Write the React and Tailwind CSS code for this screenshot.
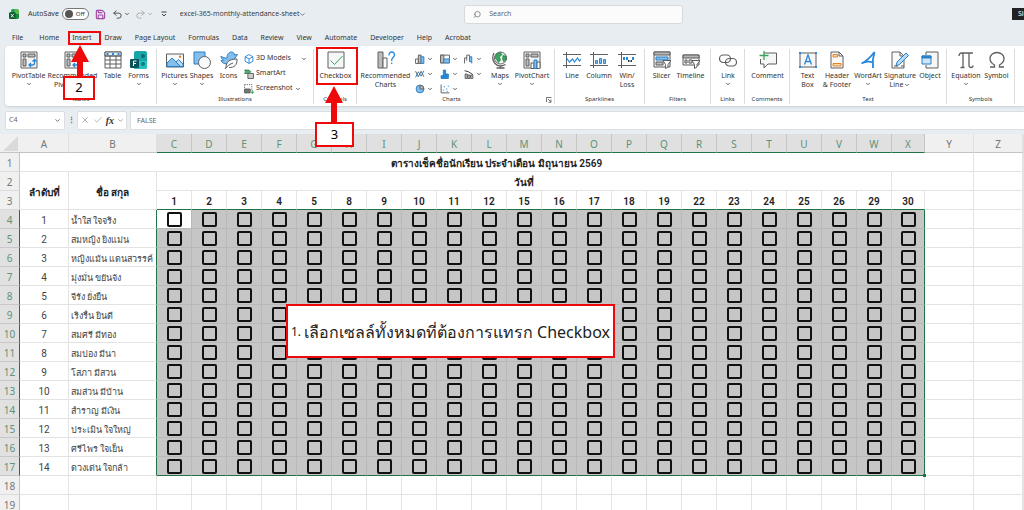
import React from "react";
import { ChevronDown, Search, Save, Undo2, Redo2, X, Check } from "lucide-react";

const tabs = [
  "File", "Home", "Insert", "Draw", "Page Layout", "Formulas", "Data",
  "Review", "View", "Automate", "Developer", "Help", "Acrobat",
];

const columns = "CDEFGHIJKLMNOPQRSTUVWX".split("");
const days = [1, 2, 3, 4, 5, 8, 9, 10, 11, 12, 15, 16, 17, 18, 19, 22, 23, 24, 25, 26, 29, 30];

const students = [
  "น้ำใส ใจจริง",
  "สมหญิง ยิงแม่น",
  "หญิงแม้น แดนสวรรค์",
  "มุ่งมั่น ขยันจัง",
  "จีรัง ยั่งยืน",
  "เริงรื่น ยินดี",
  "สมศรี มีทอง",
  "สมปอง มีนา",
  "โสภา มีสวน",
  "สมส่วน มีบ้าน",
  "สำราญ มีเงิน",
  "ประเมิน ใจใหญ่",
  "ศรีไพร ใจเย็น",
  "ดวงเด่น ใจกล้า",
];

// ------------------------------
// Icons
// ------------------------------
const Icon = ({ children, small }) => (
  <svg
    viewBox="0 0 18 18"
    className={small ? "h-[10px] w-[10px] shrink-0" : "h-[18px] w-[18px] shrink-0"}
    fill="none"
    stroke="#5f5f5f"
    strokeWidth={small ? 1.7 : 1}
  >
    {children}
  </svg>
);

const ExcelLogo = () => (
  <svg viewBox="0 0 18 18" className="h-[10px] w-[10px]">
    <path d="M7 0h8a3 3 0 0 1 3 3v6H4V3a3 3 0 0 1 3-3z" fill="#5dbb4a" />
    <path d="M4 3a3 3 0 0 1 3-3h3v9H4z" fill="#1f9d55" />
    <path d="M9 9h9v6a3 3 0 0 1-3 3H9z" fill="#1a8a44" />
    <rect x="0" y="6" width="12" height="12" rx="2" fill="#0f5c2e" />
    <path d="M3.500 9l5 6M8.500 9l-5 6" stroke="#fff" strokeWidth="1.600" />
  </svg>
);

const icons = {
  pivot: (
    <Icon>
      <path d="M1 1h16v16H1z" fill="#f3f3f3" />
      <path d="M3 3h3v3H3zM8 3h7v3H8zM3 8h3v7H3z" fill="#bdbdbd" />
      <path d="M9 14h3.500q2 0 2-2V9M12.500 10.500l2-2 2 2M11 12l-2 2 2 2" stroke="#2b88d8" strokeWidth="1.300" />
    </Icon>
  ),
  table: (
    <Icon>
      <path d="M1 1h16v16H1z" fill="#fff" />
      <path d="M1 1h16v4H1z" fill="#e3f0fa" />
      <path d="M1 5h16M1 9h16M1 13h16M6 5v12M12 5v12" />
      <path d="M2.500 3h2M8 3h2M13.500 3h2" stroke="#2b88d8" strokeWidth="2" />
    </Icon>
  ),
  forms: (
    <Icon>
      <rect x="4" y="0" width="13" height="18" rx="2" fill="#1aa5a8" stroke="none" />
      <path d="M4 10h13v6a2 2 0 0 1-2 2H4z" fill="#2bc0c0" stroke="none" />
      <circle cx="13" cy="5" r="2" fill="#0b6a72" stroke="none" />
      <circle cx="13" cy="13" r="2" fill="#0b7c84" stroke="none" />
      <rect x="0" y="8" width="9" height="9" rx="1" fill="#07525c" stroke="none" />
      <path d="M3.500 15v-5h3M3.500 12.500h2.500" stroke="#fff" />
    </Icon>
  ),
  pictures: (
    <Icon>
      <path d="M0.500 3h17v13H0.500z" fill="#f8f8f8" />
      <path d="M1 15.500V12l5-5 9 8.500z" fill="#83beec" stroke="#2b7fc3" />
      <path d="M10 11l2.500-2.500 4.500 4.500v2.500h-2.500z" fill="#b8daf4" stroke="#2b7fc3" />
      <circle cx="14" cy="5.800" r="1.200" fill="#e8832a" stroke="none" />
    </Icon>
  ),
  shapes: (
    <Icon>
      <path d="M1 1h11v12H1z" fill="#83beec" stroke="#2b7fc3" />
      <circle cx="11.500" cy="11.500" r="6" fill="#fafafa" />
    </Icon>
  ),
  bird: (
    <Icon>
      <path d="M1 5c2 2 4 2 6 2 0-4 2-6 4.500-6 2 0 3 1.500 3 3l3-.500-2.500 3.500C14 12 11 13 7 13 4 13 2 11.500 1 9.500l2.500-.500C2 8 1 7 1 5z" fill="#83beec" stroke="#2b7fc3" />
      <path d="M6 17c0-6 3-9 11-9 .500 6-3 9-8 8.500M5 18c2-3 5-5 8-6" fill="#fafafa" />
    </Icon>
  ),
  checkbox: (
    <Icon>
      <path d="M1 1h16v16H1z" fill="#f6f6f6" />
      <path d="M3.500 9.500l4 4 8-8.500" stroke="#35a35e" />
    </Icon>
  ),
  recCharts: (
    <Icon>
      <path d="M1 1h5v16H1z" fill="#bcbcbc" />
      <path d="M6 7h4v10H6z" fill="#fff" />
      <path d="M12 4.500C12 2 13 1 14.700 1s2.800 1 2.800 3-2.800 2.500-2.800 5v1M14.700 11.500v1.500" stroke="#2b88d8" strokeWidth="1.300" />
    </Icon>
  ),
  globe: (
    <Icon>
      <circle cx="9.500" cy="7" r="6" fill="#eef7f1" />
      <path d="M5.500 3l4-1.500 1.500 2-2.500 2.500 1 3-2 2.500-2-3-1.500-2zM12 4.500l3 .500v4l-2.500 1.500-1-3z" fill="#3aa663" stroke="#207a44" strokeWidth="0.700" />
      <path d="M3 2Q0 8 4 12.500T14.500 13.500M9.500 14.500v2.500M5.500 17h8" strokeWidth="1.300" />
    </Icon>
  ),
  pivotChart: (
    <Icon>
      <path d="M1 1h16v16H1z" fill="#f3f3f3" />
      <path d="M3 3h3v3H3zM8 3h7v3H8zM3 8h3v7H3z" fill="#bdbdbd" />
      <path d="M8 12h3v5.500H8z" fill="#fff" />
      <path d="M11 9h3v8.500h-3z" fill="#83beec" stroke="#2b7fc3" />
      <path d="M14 11h3v6.500h-3z" fill="#fff" />
    </Icon>
  ),
  line: (
    <Icon>
      <path d="M0 3.500h18M0 14.500h18M3.500 1v16" />
      <path d="M3.500 7l3 4 3-3 2 3 3-4 2 3 1.500-2" stroke="#2b88d8" strokeWidth="1.200" />
    </Icon>
  ),
  column: (
    <Icon>
      <path d="M0 3.500h18M0 14.500h18M3.500 1v16" />
      <path d="M5.500 9.500h2v3h-2zM9.500 7.500h2v5h-2zM13.500 8.500h2v4h-2z" fill="#83beec" stroke="#2b88d8" />
    </Icon>
  ),
  winLoss: (
    <Icon>
      <path d="M0 3.500h18M0 14.500h18M3.500 1v16" />
      <path d="M5 6h2v3H5zM8 6h2v3H8zM14 6h2v3h-2z" fill="#2b88d8" stroke="none" />
      <path d="M10 9h1.500v2H10zM12.500 9H14v2h-1.500z" fill="#333" stroke="none" />
    </Icon>
  ),
  slicer: (
    <Icon>
      <path d="M1 1h16v15H1z" fill="#f3f3f3" />
      <path d="M1 1h16v3H1z" fill="#b5b5b5" />
      <path d="M3 6h12v3H3z" fill="#83beec" stroke="#2b7fc3" />
      <path d="M3 11h7v3H3z" fill="#bdbdbd" />
      <path d="M10 9.500h8l-3 4v2.500l-2.500 1.500v-4z" fill="#fff" />
    </Icon>
  ),
  timeline: (
    <Icon>
      <path d="M1 4h16v10H1z" fill="#f3f3f3" />
      <path d="M1 4h16v3H1z" fill="#b5b5b5" />
      <path d="M3 9h2v3H3zM7 9h3v3H7z" fill="#ddd" />
      <path d="M10 9.500h8l-3 4v2.500l-2.500 1.500v-4z" fill="#fff" />
    </Icon>
  ),
  link: (
    <Icon>
      <rect x="0.500" y="4" width="11" height="7.500" rx="3.700" strokeWidth="1.200" />
      <rect x="6.500" y="7.500" width="11" height="7.500" rx="3.700" strokeWidth="1.200" />
    </Icon>
  ),
  comment: (
    <Icon>
      <path d="M5 2h12.500v11H9l-4 4v-4H1.500V8" fill="#f6f6f6" />
      <path d="M5 0v9M0.500 4.500h9" stroke="#35a35e" strokeWidth="1.300" />
    </Icon>
  ),
  textBox: (
    <Icon>
      <path d="M1 2h16v14H1z" fill="#f6f6f6" />
      <path d="M5.500 13.500L9 4l3.500 9.500M6.500 10.500h5" stroke="#2b88d8" strokeWidth="1.300" />
      <path d="M0 1h2v2H0zM16 1h2v2h-2zM0 15h2v2H0zM16 15h2v2h-2z" fill="#2b88d8" stroke="none" />
    </Icon>
  ),
  header: (
    <Icon>
      <path d="M3 1h8l4 4v12H3z" fill="#fafafa" />
      <path d="M11 1v4h4" />
      <path d="M5 3.500h4.500v2.500H5zM5 12.500h8v2.500H5z" fill="#fbd9a8" stroke="#e8832a" />
    </Icon>
  ),
  wordArt: (
    <Icon>
      <path d="M2.500 12.500Q9 9.500 15.500 1Q13 9 14 17M2.500 12.500Q8 9.500 14 11.500" stroke="#2b88d8" strokeWidth="1.800" />
    </Icon>
  ),
  signature: (
    <Icon>
      <path d="M1 1h8l4 4v12H1z" fill="#fafafa" />
      <path d="M9 1v4h4" />
      <path d="M5 15l1-4 9-9 2.500 2.500-9 9z" fill="#b8daf4" stroke="#2b7fc3" />
      <path d="M3 15h4M10 15h3" />
    </Icon>
  ),
  object: (
    <Icon>
      <path d="M5 4V1h12v16H5v-3" fill="#f6f6f6" />
      <path d="M1 5h9v8H1z" fill="#cfe6f8" stroke="#2b7fc3" />
      <path d="M1 5h9v2H1z" fill="#2b88d8" stroke="#2b7fc3" />
    </Icon>
  ),
  pi: (
    <Icon>
      <path d="M2 5q0-3 3-3h11M6 2v14M3.500 16.500h4M12 2v12q0 2.500 2 2.500t2-2" strokeWidth="1.300" />
    </Icon>
  ),
  omega: (
    <Icon>
      <path d="M2 16h4.500v-2Q2 11.500 2 7.500C2 4 5 1.500 9 1.500s7 2.500 7 6q0 4-4.500 6.500v2H16" strokeWidth="1.300" />
    </Icon>
  ),
  cube: (
    <Icon small>
      <path d="M9 1l7 4v8l-7 4-7-4V5zM2 5l7 4 7-4M9 9v8" stroke="#2b88d8" />
    </Icon>
  ),
  smartArt: (
    <Icon small>
      <path d="M1 2h8l3 3-3 3H1l2-3z" fill="#58b07a" stroke="#35805a" />
      <path d="M7 8h10v9H7z" fill="#d0d0d0" />
    </Icon>
  ),
  screenshot: (
    <Icon small>
      <path d="M1 1h13v10H1z" strokeDasharray="2 2" />
      <path d="M1 9h10v7H1z" fill="#777" />
      <path d="M15 11v7M11.500 15h6.500" stroke="#35a35e" />
    </Icon>
  ),
};

const miniCharts = [
  <React.Fragment key="column">
    <path d="M1 9h5v8H1z" fill="#fff" />
    <path d="M6 2h5v15H6z" fill="#bcbcbc" />
    <path d="M11 5h5v12h-5z" fill="#83beec" stroke="#2b7fc3" />
  </React.Fragment>,
  <React.Fragment key="hierarchy">
    <path d="M1 2h16v14H1z" fill="#fff" />
    <path d="M1 2h6v14H1z" fill="#bcbcbc" />
    <path d="M7 9h10v7H7z" fill="#83beec" stroke="#2b7fc3" />
  </React.Fragment>,
  <React.Fragment key="waterfall">
    <path d="M1 17V7h4M5 12V2h5v10M14 14v3" />
    <path d="M10 5h4v9h-4z" fill="#83beec" stroke="#2b7fc3" />
  </React.Fragment>,
  <React.Fragment key="line">
    <path d="M1 4l5 10 5-10 5 10" />
    <path d="M1 15L6 5l5 8 5-10" stroke="#2b7fc3" />
  </React.Fragment>,
  <path key="statistic" d="M2 17v-5h4v5zM6 17V2h4v15zM10 17V9h5v8z" fill="#2b88d8" stroke="#2b7fc3" />,
  <React.Fragment key="combo">
    <path d="M2 9h4v8H2zM7 11h4v6H7zM12 11h4v6h-4z" fill="#bcbcbc" />
    <path d="M1 3l7 2 8 5" stroke="#333" />
  </React.Fragment>,
  <React.Fragment key="pie">
    <circle cx="9" cy="9" r="7" fill="#83beec" stroke="#2b7fc3" />
    <path d="M9 2a7 7 0 0 1 7 7H9z" fill="#bcbcbc" />
  </React.Fragment>,
  <React.Fragment key="scatter">
    <path d="M2 1v15h15" />
    <path d="M5 11h2M7 5h2M11 9h2M14 4h2M12 13h2" stroke="#2b7fc3" />
  </React.Fragment>,
];

const SmallArrow = ({ className = "" }) => (
  <ChevronDown className={`h-[6px] w-[6px] shrink-0 ${className}`} strokeWidth={3} />
);

// ------------------------------
// Ribbon
// ------------------------------
const Tool = ({ icon, lines, arrow, inlineArrow, width }) => (
  <button type="button" className={`flex shrink-0 flex-col items-center ${width}`}>
    {icons[icon]}
    <span className="mt-[2px] flex flex-col items-center text-[7px] leading-[9px] whitespace-nowrap">
      {lines.map((line, i) => (
        <span key={line} className="flex items-center gap-px">
          {line}
          {inlineArrow && i === lines.length - 1 && <SmallArrow />}
        </span>
      ))}
    </span>
    {arrow && <SmallArrow className="mt-px" />}
  </button>
);

const Group = ({ label, width, launcher, children }) => (
  <section className={`mt-[3px] mb-[2px] flex shrink-0 flex-col border-r border-[#dcdcdc] ${width}`}>
    <div className="flex min-h-0 flex-1 items-start justify-center pt-[2px] pl-px">{children}</div>
    <div className="flex h-[9px] items-center">
      <h2 className="flex-1 text-center text-[6px] leading-[9px]">{label}</h2>
      {launcher && (
        <button type="button" aria-label={`${label} settings`} className="mr-[2px]">
          <svg viewBox="0 0 12 12" className="h-[6px] w-[6px]" fill="none" stroke="#555" strokeWidth="1.600">
            <path d="M1 10V1h10M4 4l6 6M10 5v5.500H5" />
          </svg>
        </button>
      )}
    </div>
  </section>
);

const Ribbon = () => (
  <div className="ml-[5px] flex h-[60px] shrink-0 overflow-hidden rounded-l-[4px] bg-white shadow-sm">
    <Group label="Tables" width="w-[152px]">
      <Tool icon="pivot" lines={["PivotTable"]} arrow width="w-[35px]" />
      <Tool icon="pivot" lines={["Recommended", "PivotTables"]} width="w-[53px]" />
      <Tool icon="table" lines={["Table"]} width="w-[27px]" />
      <Tool icon="forms" lines={["Forms"]} arrow width="w-[25px]" />
    </Group>
    <Group label="Illustrations" width="w-[157px]">
      <Tool icon="pictures" lines={["Pictures"]} arrow width="w-[27px]" />
      <Tool icon="shapes" lines={["Shapes"]} arrow width="w-[27px]" />
      <Tool icon="bird" lines={["Icons"]} width="w-[27px]" />
      <div className="flex w-[68px] flex-col pl-[2px] text-[7px] whitespace-nowrap">
        <button type="button" className="flex h-[15px] items-center gap-[2px]">
          {icons.cube} 3D Models <SmallArrow className="ml-2" />
        </button>
        <button type="button" className="flex h-[15px] items-center gap-[2px]">{icons.smartArt} SmartArt</button>
        <button type="button" className="flex h-[15px] items-center gap-[2px]">
          {icons.screenshot} Screenshot <SmallArrow />
        </button>
      </div>
    </Group>
    <Group label="Controls" width="w-[43px]">
      <Tool icon="checkbox" lines={["Checkbox"]} width="w-[42px]" />
    </Group>
    <Group label="Charts" width="w-[198px]" launcher>
      <Tool icon="recCharts" lines={["Recommended", "Charts"]} width="w-[53px]" />
      <div className="grid w-[77px] grid-cols-3 pl-[3px]">
        {miniCharts.map((shape) => (
          <button type="button" key={shape.key} aria-label={`${shape.key} chart`} className="flex h-[15px] items-center gap-[2px]">
            <Icon small>{shape}</Icon>
            <SmallArrow />
          </button>
        ))}
      </div>
      <Tool icon="globe" lines={["Maps"]} arrow width="w-[22px]" />
      <Tool icon="pivotChart" lines={["PivotChart"]} arrow width="w-[42px]" />
    </Group>
    <Group label="Sparklines" width="w-[90px]">
      <Tool icon="line" lines={["Line"]} width="w-[26px]" />
      <Tool icon="column" lines={["Column"]} width="w-[28px]" />
      <Tool icon="winLoss" lines={["Win/", "Loss"]} width="w-[28px]" />
    </Group>
    <Group label="Filters" width="w-[66px]">
      <Tool icon="slicer" lines={["Slicer"]} width="w-[25px]" />
      <Tool icon="timeline" lines={["Timeline"]} width="w-[33px]" />
    </Group>
    <Group label="Links" width="w-[34px]">
      <Tool icon="link" lines={["Link"]} arrow width="w-[26px]" />
    </Group>
    <Group label="Comments" width="w-[45px]">
      <Tool icon="comment" lines={["Comment"]} width="w-[44px]" />
    </Group>
    <Group label="Text" width="w-[157px]">
      <Tool icon="textBox" lines={["Text", "Box"]} width="w-[27px]" />
      <Tool icon="header" lines={["Header", "& Footer"]} width="w-[32px]" />
      <Tool icon="wordArt" lines={["WordArt"]} arrow width="w-[30px]" />
      <Tool icon="signature" lines={["Signature", "Line"]} inlineArrow width="w-[34px]" />
      <Tool icon="object" lines={["Object"]} width="w-[26px]" />
    </Group>
    <Group label="Symbols" width="w-[68px]">
      <Tool icon="pi" lines={["Equation"]} arrow width="w-[31px]" />
      <Tool icon="omega" lines={["Symbol"]} width="w-[30px]" />
    </Group>
  </div>
);

const TitleBar = () => (
  <header className="flex h-[28px] shrink-0 items-center text-[7px]">
    <div className="flex w-[464px] shrink-0 items-center pl-[9px]">
      <ExcelLogo />
      <div className="ml-[9px] flex items-center gap-[3px]">
        <span id="autosave">AutoSave</span>
        <button
          type="button"
          role="switch"
          aria-checked="false"
          aria-labelledby="autosave"
          className="flex h-[12px] w-[27px] items-center gap-[3px] rounded-full border border-[#777] bg-white px-[2px] text-[6px]"
        >
          <span className="h-[8px] w-[8px] rounded-full bg-[#555]" />
          Off
        </button>
      </div>
      <Save className="ml-[6px] h-[11px] w-[11px] text-[#a349a4]" strokeWidth={2.5} />
      <Undo2 className="ml-[6px] h-[11px] w-[11px] text-[#444]" />
      <SmallArrow className="ml-px" />
      <Redo2 className="ml-[5px] h-[11px] w-[11px] text-[#aaa]" />
      <SmallArrow className="ml-px text-[#999]" />
      <svg viewBox="0 0 12 12" className="ml-[8px] h-[6px] w-[6px]" fill="none" stroke="#444" strokeWidth="2">
        <path d="M1 2h10M2 6l4 4 4-4" />
      </svg>
      <span className="ml-[13px] font-['Open_Sans',sans-serif]">excel-365-monthly-attendance-sheet</span>
      <ChevronDown className="h-[7px] w-[7px]" />
    </div>
    <label className="flex h-[19px] w-[219px] items-center gap-2 rounded-[3px] border border-[#d5dadd] bg-[#fbfbfb] px-2">
      <Search className="h-[9px] w-[9px] -scale-x-100 text-[#666]" />
      <input type="text" placeholder="Search" aria-label="Search" className="w-full outline-none placeholder:text-[#666]" />
    </label>
    <button type="button" className="ml-auto h-[12px] w-[12px] overflow-hidden bg-[#222] pl-[6px] text-left whitespace-nowrap text-white">
      Sign in
    </button>
  </header>
);

const FormulaBar = () => (
  <div className="flex h-[28px] shrink-0 items-center pl-[5px] text-[7px] text-[#666]">
    <div className="flex h-[19px] w-[60px] items-center justify-between rounded-[2px] border border-[#dcdfe1] bg-white px-[3px]">
      C4
      <ChevronDown className="h-[7px] w-[7px]" strokeWidth={3} />
    </div>
    <span className="w-[12px] text-center font-bold">⋮</span>
    <div className="flex h-[19px] w-[50px] items-center justify-between rounded-[2px] border border-[#dcdfe1] bg-white px-[2px]">
      <X className="h-[10px] w-[10px] text-[#aaa]" />
      <Check className="h-[10px] w-[10px] text-[#aaa]" />
      <span className="font-['Liberation_Serif',serif] text-[10px] font-bold text-[#333] italic">fx</span>
      <ChevronDown className="h-[7px] w-[7px]" />
    </div>
    <input
      type="text"
      aria-label="Formula"
      defaultValue="FALSE"
      className="ml-[3px] h-[19px] flex-1 border border-r-0 border-[#dcdfe1] bg-white px-[6px]"
    />
  </div>
);

// ------------------------------
// Sheet
// ------------------------------
const cell = "h-[19px] p-0 pt-[3px] border-r border-b border-[#e3e3e3] overflow-hidden whitespace-nowrap";
const headCell = "text-center font-semibold text-[#222] font-[Roboto,sans-serif]";

const RowHead = ({ n, active }) => (
  <th
    scope="row"
    className={`h-[19px] border-r border-b p-0 pt-[3px] text-center font-normal ${
      active
        ? "border-r-[#217346] border-b-[#c8c8c8] bg-[#e1e1e1] text-[#5f9277]"
        : "border-r-[#c4c4c4] border-b-[#dcdcdc] bg-[#f0f0f0] text-[#777]"
    }`}
  >
    {n}
  </th>
);

const Sheet = () => (
  <table className="w-full table-fixed border-separate border-spacing-0 bg-white text-[10px] leading-[15px] text-[#444]">
    <colgroup>
      <col className="w-[20px]" />
      <col className="w-[49px]" />
      <col className="w-[88px]" />
      {columns.map((c) => (
        <col key={c} className={c === "X" ? "w-[33px]" : "w-[35px]"} />
      ))}
      <col className="w-[49px]" />
      <col className="w-[49px]" />
      <col />
    </colgroup>
    <thead>
      <tr>
        <th className="h-[19px] border-b border-[#c4c4c4] bg-[#f0f0f0] p-0" aria-label="Select all">
          <svg viewBox="0 0 20 18" className="block h-[18px] w-full">
            <path d="M18 2v15H3z" fill="#dadada" />
          </svg>
        </th>
        {["A", "B", ...columns, "Y", "Z", ""].map((c) => (
          <th
            key={c}
            scope="col"
            className={`h-[19px] border-r border-b p-0 pt-[3px] font-normal ${
              columns.includes(c)
                ? "border-r-[#c6c6c6] border-b-[#217346] bg-[#e0e0e0] text-[#5f9277]"
                : "border-r-[#e0e0e0] border-b-[#c4c4c4] bg-[#f0f0f0] text-[#777]"
            }`}
          >
            {c}
          </th>
        ))}
      </tr>
    </thead>
    <tbody>
      <tr>
        <RowHead n={1} />
        <td colSpan={25} className={`${cell} ${headCell}`}>
          ตารางเช็คชื่อนักเรียน ประจำเดือน มิถุนายน 2569
        </td>
        <td className={cell} />
        <td className={cell} />
      </tr>
      <tr>
        <RowHead n={2} />
        <td rowSpan={2} className={`${cell} ${headCell}`}>ลำดับที่</td>
        <td rowSpan={2} className={`${cell} ${headCell}`}>ชื่อ สกุล</td>
        <td colSpan={21} className={`${cell} ${headCell}`}>วันที่</td>
        <td colSpan={2} className={cell} />
        <td className={cell} />
        <td className={cell} />
      </tr>
      <tr>
        <RowHead n={3} />
        {days.map((d) => (
          <td key={d} className={`${cell} ${headCell} border-b-[#217346]`}>{d}</td>
        ))}
        <td className={cell} />
        <td className={cell} />
        <td className={cell} />
      </tr>
      {students.map((name, r) => (
        <tr key={name}>
          <RowHead n={r + 4} active />
          <td className={`${cell} text-center font-[Roboto,sans-serif]`}>{r + 1}</td>
          <td className={`${cell} border-r-[#217346] pl-[2px] text-[9px]`}>{name}</td>
          {days.map((d, i) => (
            <td
              key={d}
              className={`relative h-[19px] border-r border-b p-0 pt-px ${i === 21 ? "border-r-[#217346]" : "border-r-[#b8b8b8]"} ${
                r === 13 ? "border-b-[#217346]" : "border-b-[#b8b8b8]"
              } ${r === 0 && i === 0 ? "bg-white" : "bg-[#c6c6c6]"}`}
            >
              <input
                type="checkbox"
                aria-label={`${name} ${d}`}
                className="mx-auto block h-[15px] w-[15px] appearance-none rounded-[2px] border-2 border-[#111]"
              />
              {r === 13 && i === 21 && <span className="absolute -right-[2px] -bottom-[2px] h-[3px] w-[3px] bg-[#217346]" />}
            </td>
          ))}
          <td className={cell} />
          <td className={cell} />
          <td className={cell} />
        </tr>
      ))}
      {[18, 19].map((n) => (
        <tr key={n}>
          <RowHead n={n} />
          {Array.from({ length: 27 }, (_, i) => (
            <td key={i} className={cell} />
          ))}
        </tr>
      ))}
    </tbody>
  </table>
);

// ------------------------------
// Step callouts
// ------------------------------
const Arrow = ({ className }) => (
  <svg viewBox="0 0 18 36" className={`absolute h-[36px] w-[18px] ${className}`}>
    <path d="M9 0l9 17h-6v19H6V17H0z" fill="#ee0a0a" />
  </svg>
);

const Callouts = () => (
  <>
    <div className="absolute top-[31px] left-[68px] h-[14px] w-[33px] border-2 border-[#ee0a0a]" />
    <Arrow className="top-[45px] left-[71px]" />
    <div className="absolute top-[76px] left-[63px] flex h-[24px] w-[32px] items-center justify-center border-2 border-[#ee0a0a] bg-white text-[13px] text-black">
      2
    </div>
    <div className="absolute top-[47px] left-[316px] h-[38px] w-[42px] border-2 border-[#ee0a0a]" />
    <Arrow className="top-[86px] left-[325px]" />
    <div className="absolute top-[122px] left-[315px] flex h-[25px] w-[39px] items-center justify-center border-2 border-[#ee0a0a] bg-white text-[13px] text-black">
      3
    </div>
    <p className="absolute top-[304px] left-[286px] flex h-[54px] w-[329px] items-center justify-center border-2 border-[#ee0a0a] bg-white pt-[2px] text-[16px] whitespace-nowrap text-[#222]">
      <span className="mr-[3px] text-[12px]">1.</span>
      เลือกเซลล์ทั้งหมดที่ต้องการแทรก
      <span className="ml-[4px]">Checkbox</span>
    </p>
  </>
);

const App = () => (
  <div className="relative flex h-screen flex-col overflow-hidden bg-[#e7edf1] font-['Noto_Sans',sans-serif] text-[#333]">
    <TitleBar />
    <nav className="flex h-[18px] shrink-0 items-center gap-[13px] pt-[2px] pl-[12px] text-[7px]">
      {tabs.map((tab) => (
        <button type="button" key={tab} className={tab === "File" ? "mr-[3px]" : ""}>{tab}</button>
      ))}
    </nav>
    <Ribbon />
    <FormulaBar />
    <Sheet />
    <Callouts />
  </div>
);

export default App;
